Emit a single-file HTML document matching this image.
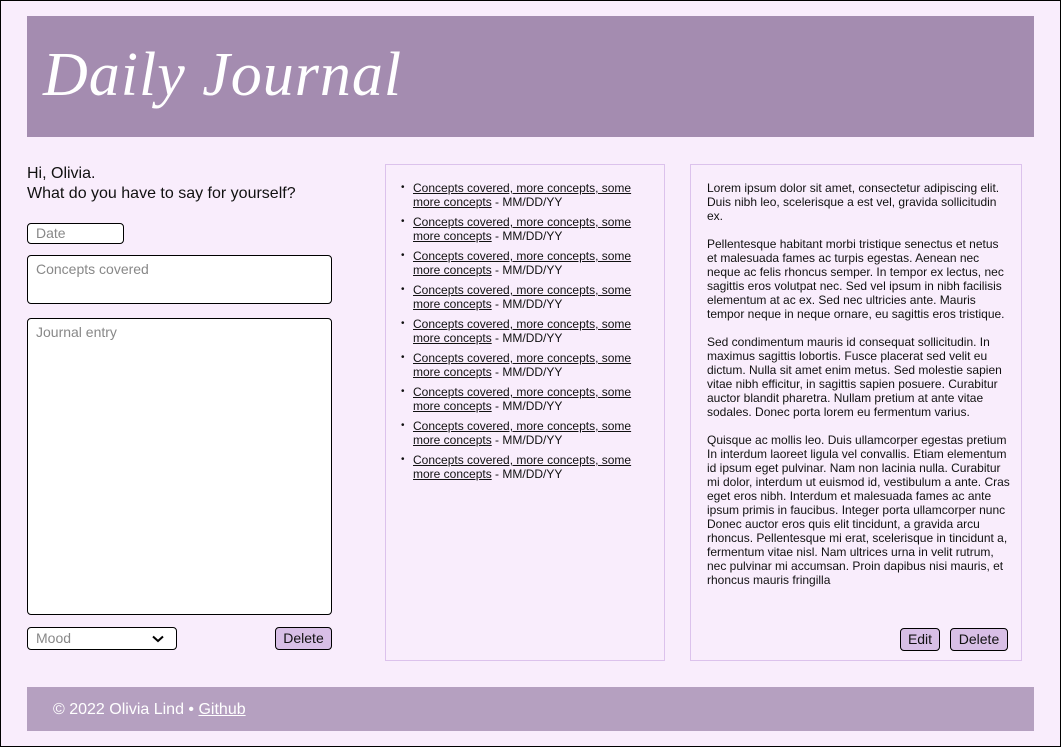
<!DOCTYPE html>
<html><head><style>
*{box-sizing:border-box;margin:0;padding:0}
body{width:1061px;height:747px;background:#f9edfc;font-family:"Liberation Sans",sans-serif;color:#111;position:relative;overflow:hidden}
.frame{position:absolute;left:0;top:0;width:1061px;height:747px;border:1px solid #000}
.hdr{position:absolute;left:27px;top:16px;width:1007px;height:121px;background:#a48cb0}
.hdr span{position:absolute;left:16px;top:24px;font-family:"Liberation Serif",serif;font-style:italic;font-size:62px;color:#fff;letter-spacing:1px}
.greet{position:absolute;left:27px;top:164px;font-size:16px;line-height:20px}
.in{position:absolute;border:1px solid #000;border-radius:4px;background:#fff;color:#888;font-size:14px;padding-left:8px}
.btn{position:absolute;background:#d8bfe6;border:1px solid #000;border-radius:4px;font-size:14px;text-align:center;line-height:21px;height:23px}
.box{position:absolute;border:1px solid #dcc2ec;top:164px;height:497px}
ul{list-style:none;position:absolute;left:27px;top:16px;width:222px;font-size:12px;line-height:14px}
li{position:relative;margin-bottom:6px}
li:before{content:"•";position:absolute;left:-12px;font-size:10px}
li a{color:#111;text-decoration:underline}
.txt{position:absolute;left:16px;top:16px;font-size:12px;line-height:14px;white-space:nowrap}
.txt p{margin-bottom:14px}
.ftr{position:absolute;left:27px;top:687px;width:1007px;height:44px;background:#b5a0c0;color:#fff;font-size:16px;line-height:46px;padding-left:26px}
.ftr u{color:#fff}
</style></head><body>
<div class="frame"></div>
<div class="hdr"><span>Daily Journal</span></div>
<div class="greet">Hi, Olivia.<br>What do you have to say for yourself?</div>
<div class="in" style="left:27px;top:223px;width:97px;height:21px;line-height:19px">Date</div>
<div class="in" style="left:27px;top:255px;width:305px;height:49px;padding-top:5px">Concepts covered</div>
<div class="in" style="left:27px;top:318px;width:305px;height:297px;padding-top:5px">Journal entry</div>
<div class="in" style="left:27px;top:627px;width:150px;height:23px;line-height:21px">Mood<svg style="position:absolute;right:12px;top:7px" width="12" height="8" viewBox="0 0 12 8"><path d="M1 1.5L6 6 11 1.5" fill="none" stroke="#000" stroke-width="2"/></svg></div>
<div class="btn" style="left:275px;top:627px;width:57px">Delete</div>
<div class="box" style="left:385px;width:280px">
<ul>
<li><a>Concepts covered, more concepts, some more concepts</a> - MM/DD/YY</li>
<li><a>Concepts covered, more concepts, some more concepts</a> - MM/DD/YY</li>
<li><a>Concepts covered, more concepts, some more concepts</a> - MM/DD/YY</li>
<li><a>Concepts covered, more concepts, some more concepts</a> - MM/DD/YY</li>
<li><a>Concepts covered, more concepts, some more concepts</a> - MM/DD/YY</li>
<li><a>Concepts covered, more concepts, some more concepts</a> - MM/DD/YY</li>
<li><a>Concepts covered, more concepts, some more concepts</a> - MM/DD/YY</li>
<li><a>Concepts covered, more concepts, some more concepts</a> - MM/DD/YY</li>
<li><a>Concepts covered, more concepts, some more concepts</a> - MM/DD/YY</li>
</ul></div>
<div class="box" style="left:690px;width:332px">
<div class="txt">
<p>Lorem ipsum dolor sit amet, consectetur adipiscing elit.<br>Duis nibh leo, scelerisque a est vel, gravida sollicitudin<br>ex.</p>
<p>Pellentesque habitant morbi tristique senectus et netus<br>et malesuada fames ac turpis egestas. Aenean nec<br>neque ac felis rhoncus semper. In tempor ex lectus, nec<br>sagittis eros volutpat nec. Sed vel ipsum in nibh facilisis<br>elementum at ac ex. Sed nec ultricies ante. Mauris<br>tempor neque in neque ornare, eu sagittis eros tristique.</p>
<p>Sed condimentum mauris id consequat sollicitudin. In<br>maximus sagittis lobortis. Fusce placerat sed velit eu<br>dictum. Nulla sit amet enim metus. Sed molestie sapien<br>vitae nibh efficitur, in sagittis sapien posuere. Curabitur<br>auctor blandit pharetra. Nullam pretium at ante vitae<br>sodales. Donec porta lorem eu fermentum varius.</p>
<p>Quisque ac mollis leo. Duis ullamcorper egestas pretium<br>In interdum laoreet ligula vel convallis. Etiam elementum<br>id ipsum eget pulvinar. Nam non lacinia nulla. Curabitur<br>mi dolor, interdum ut euismod id, vestibulum a ante. Cras<br>eget eros nibh. Interdum et malesuada fames ac ante<br>ipsum primis in faucibus. Integer porta ullamcorper nunc<br>Donec auctor eros quis elit tincidunt, a gravida arcu<br>rhoncus. Pellentesque mi erat, scelerisque in tincidunt a,<br>fermentum vitae nisl. Nam ultrices urna in velit rutrum,<br>nec pulvinar mi accumsan. Proin dapibus nisi mauris, et<br>rhoncus mauris fringilla</p>
</div>
<div class="btn" style="left:209px;top:463px;width:40px">Edit</div>
<div class="btn" style="left:259px;top:463px;width:58px">Delete</div>
</div>
<div class="ftr">© 2022 Olivia Lind • <u>Github</u></div>
</body></html>
